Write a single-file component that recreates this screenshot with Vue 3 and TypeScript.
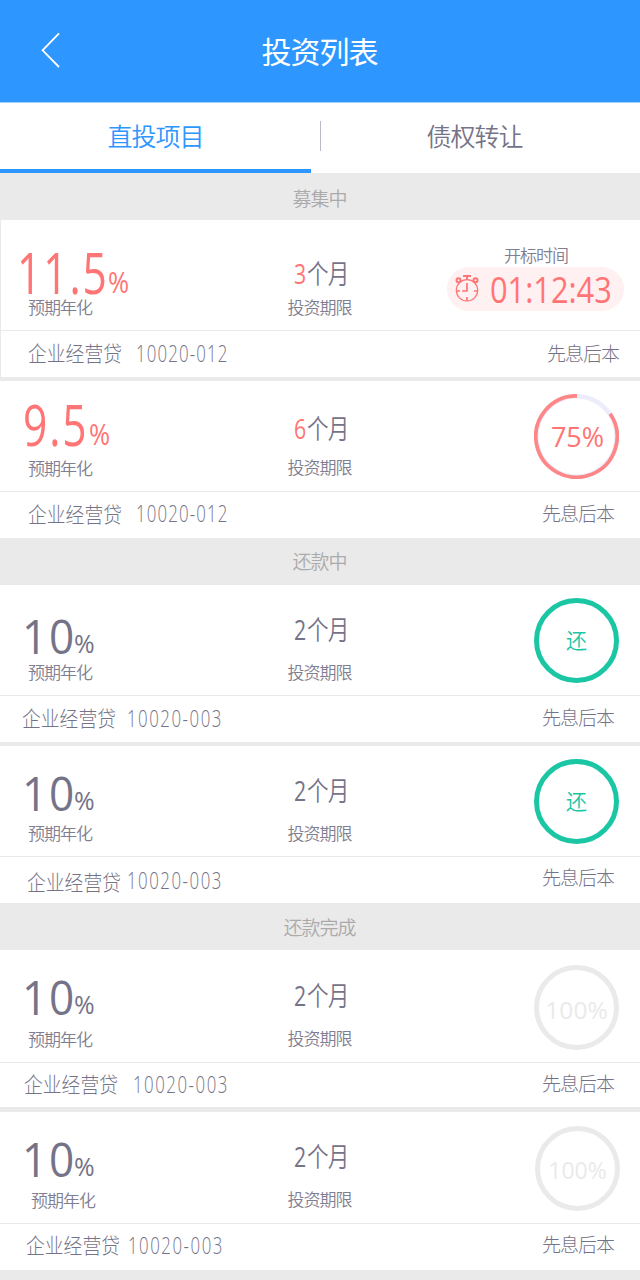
<script setup lang="ts">
type Status = 'countdown' | 'raising' | 'repaying' | 'done'
interface Project {
  id: string
  rate: string
  months: number
  code: string
  status: Status
}
interface Group {
  title: string
  items: Project[]
}

const groups: Group[] = [
  {
    title: '募集中',
    items: [
      { id: 'p1', rate: '11.5', months: 3, code: '10020-012', status: 'countdown' },
      { id: 'p2', rate: '9.5', months: 6, code: '10020-012', status: 'raising' },
    ],
  },
  {
    title: '还款中',
    items: [
      { id: 'p3', rate: '10', months: 2, code: '10020-003', status: 'repaying' },
      { id: 'p4', rate: '10', months: 2, code: '10020-003', status: 'repaying' },
    ],
  },
  {
    title: '还款完成',
    items: [
      { id: 'p5', rate: '10', months: 2, code: '10020-003', status: 'done' },
      { id: 'p6', rate: '10', months: 2, code: '10020-003', status: 'done' },
    ],
  },
]
</script>

<template>
  <main class="page">
    <header class="bar">
      <svg class="back" width="20" height="36" viewBox="0 0 20 36">
        <path d="M18 1.3 L1.6 18.3 L18 35" fill="none" stroke="#fff" stroke-width="1.8" />
      </svg>
      <h1>投资列表</h1>
    </header>
    <nav class="tabs">
      <div class="tab active"><span>直投项目</span></div>
      <div class="sep"></div>
      <div class="tab"><span>债权转让</span></div>
    </nav>

    <section v-for="(g, gi) in groups" :key="g.title" :class="['group', 'g' + gi]">
      <h2>{{ g.title }}</h2>
      <article v-for="p in g.items" :key="p.id" :class="['card', p.id, p.status]">
        <div class="top">
          <div class="yield">
            <div class="rate">
              <span class="num">{{ p.rate }}</span><span class="pct">%</span>
            </div>
            <div class="label">预期年化</div>
          </div>
          <div class="term">
            <div class="months">
              <span class="n">{{ p.months }}</span><span class="unit">个月</span>
            </div>
            <div class="label">投资期限</div>
          </div>
          <div class="state">
            <template v-if="p.status === 'countdown'">
              <div class="label open">开标时间</div>
              <div class="pill">
                <svg class="clock" width="26" height="30" viewBox="0 0 26 30" fill="none" stroke="#ff7575">
                  <circle cx="13" cy="17.3" r="10.7" stroke-width="1.2" />
                  <path d="M9 3H17M13 3V7" stroke-width="1.9" />
                  <circle cx="4.5" cy="7.2" r="2" stroke-width="2" />
                  <circle cx="21.5" cy="7.2" r="2" stroke-width="2" />
                  <path d="M13 10V18H8M2.5 18H6M20 18H23.5M13 24V28" stroke-width="1.7" />
                </svg>
                <span class="time">01:12:43</span>
              </div>
            </template>
            <div v-else class="ring">
              <svg width="85" height="85" viewBox="0 0 85 85" fill="none">
                <template v-if="p.status === 'raising'">
                  <circle cx="42.5" cy="42.5" r="40.2" stroke="#ececfa" stroke-width="4.6" />
                  <path d="M76.2 19.7A40.7 40.7 0 1 1 43 1.8" stroke="#ff8686" stroke-width="3.7" />
                </template>
                <circle v-else class="whole" cx="42.5" cy="42.5" r="40" stroke-width="5" />
              </svg>
              <span v-if="p.status === 'raising'" class="ring-text">75%</span>
              <span v-else-if="p.status === 'repaying'" class="ring-text">还</span>
              <span v-else class="ring-text">100%</span>
            </div>
          </div>
        </div>
        <div class="foot">
          <span class="name">企业经营贷</span>
          <span class="code">{{ p.code }}</span>
          <span class="mode">先息后本</span>
        </div>
      </article>
    </section>
  </main>
</template>

<style>
body {
  margin: 0;
  background: #eaeaea;
}
</style>

<style scoped>
.page {
  width: 640px;
  height: 1280px;
  overflow: hidden;
  background: #eaeaea;
  color: #757387;
  font-family: "Noto Sans CJK SC", sans-serif;
}
.bar {
  height: 102px;
  background: #2e96ff;
  border-bottom: 1px solid #a3d0ff;
  display: grid;
  grid-template-columns: 80px 1fr 80px;
  align-items: center;
}
.back { margin-left: 41px; margin-top: -2px; }
h1 {
  margin: -3px 0 0 -1px;
  color: #fff;
  font-size: 30px;
  letter-spacing: -1px;
  font-weight: 400;
  line-height: 40px;
  text-align: center;
}
.tabs {
  height: 70px;
  background: #fff;
  display: flex;
}
.tab {
  width: 311px;
  height: 66px;
  box-sizing: border-box;
  font-size: 25px;
  letter-spacing: -1px;
  font-weight: 350;
  line-height: 64px;
  text-align: center;
}
.tab.active {
  height: 70px;
  color: #2e96ff;
  border-bottom: 4px solid #2e96ff;
}
.sep { width: 1px; height: 30px; margin: 18px 0 0 9px; background: #bab9c6; }
.tab:last-child { margin-left: -2px; }

h2 {
  margin: 0 1px 0 0;
  height: 46.5px;
  color: #aaa;
  font-size: 19px;
  letter-spacing: -1px;
  font-weight: 350;
  line-height: 50px;
  text-align: center;
}
.g1 h2 { line-height: 46px; }
.g2 h2 { height: 47.5px; line-height: 48px; }

.card { height: 157.5px; background: #fff; margin-bottom: 3.5px; }
.card:last-child { margin-bottom: 0; }
.p1 { margin-left: 1px; }
.p3 { height: 157px; margin-bottom: 4px; }
.p4 { height: 157px; }
.p5 { height: 157px; margin-bottom: 5px; }
.top {
  height: 110.5px;
  display: grid;
  grid-template-columns: 288px 152px 200px;
  border-bottom: 1px solid #e9e9e9;
}
.p1 .top { margin-left: -1px; }
.p5 .top { height: 112px; }
.p6 .top { height: 111px; }
.foot {
  display: flex;
  height: 45px;
  white-space: nowrap;
}

.label {
  height: 20px;
  color: #807e90;
  font-size: 17px;
  letter-spacing: -1px;
  font-weight: 350;
  line-height: 18px;
  white-space: nowrap;
}
.yield .label { margin-left: 28px; }
.term .label { margin-left: -0.5px; line-height: 20px; }
.p3 .label, .p4 .label { line-height: 20px; }
.p6 .yield .label { margin-left: 31px; }

.rate {
  height: 60px;
  display: flex;
  line-height: 60px;
  font-family: "Open Sans", sans-serif;
  white-space: nowrap;
}
.num, .pct { transform-origin: left center; }
.num { font-size: 48px; width: 50px; letter-spacing: 2px; margin-left: 22px; line-height: 62px; transform: scaleX(0.92); }
.pct { font-size: 26px; margin-left: 2px; line-height: 76px; transform: scaleX(0.96); }
.countdown .num, .raising .num { font-size: 56px; letter-spacing: 2.5px; line-height: 61px; transform: scaleX(0.76); color: #ff7575; }
.countdown .num { width: 89px; margin-left: 17px; }
.raising .num { width: 65px; margin-left: 23px; }
.countdown .pct, .raising .pct { font-size: 29px; line-height: 80px; transform: scaleX(0.88); color: #ff7575; }
.raising .pct { margin-left: 1px; }

.yield .rate { margin-top: 20.5px; }
.p1 .yield .rate { margin-top: 22px; }
.p2 .yield .rate { margin-top: 13.5px; }
.p4 .yield .rate { margin-top: 16px; }
.p5 .yield .rate, .p6 .yield .rate { margin-top: 15.5px; }
.p1 .yield .label { margin-top: -4px; }
.p2 .yield .label { margin-top: 4.5px; }
.p3 .yield .label { margin-top: -3px; }
.p4 .yield .label { margin-top: 1.5px; }
.p5 .yield .label { margin-top: 4px; }
.p6 .yield .label { margin-top: 3px; }

.months { height: 30px; margin: 29px 0 0 6px; display: flex; line-height: 30px; white-space: nowrap; }
.n { width: 13px; font-family: "Open Sans", sans-serif; font-size: 28px; transform: scaleX(0.76); transform-origin: left center; }
.unit { margin-left: -0.5px; font-size: 27px; letter-spacing: -1px; font-weight: 350; line-height: 30px; transform: scaleX(0.8); transform-origin: left center; }
.countdown .n, .raising .n { color: #ff7575; }
.term .label { margin-top: 18px; }
.p1 .months { margin-top: 38px; }
.p1 .term .label { margin-top: 9px; }
.p2 .months { margin-top: 32px; }
.p2 .term .label { margin-top: 14px; }
.p5 .months { margin-top: 30px; }

.open { margin: 26px 0 0 64px; }
.pill {
  margin: 1px 0 0 7px;
  width: 177px;
  height: 44px;
  border-radius: 22px;
  background: #fff0f1;
  display: flex;
}
.clock { flex: none; margin: 6px 0 0 7px; }
.time {
  margin-left: 10px;
  color: #ff7575;
  font-family: "Open Sans", sans-serif;
  font-size: 36px;
  line-height: 46px;
  transform: scaleX(0.855);
  transform-origin: left center;
}
.ring { width: 85px; height: 85px; margin: 13.5px 0 0 94px; display: grid; }
.ring > * { grid-area: 1 / 1; }
.ring-text { text-align: center; font-family: "Open Sans", sans-serif; line-height: 85px; white-space: nowrap; }
.raising .ring-text { padding-left: 2px; color: #ff7575; font-size: 27px; }
.repaying .ring-text { color: #1ac6a4; font-family: "Noto Sans CJK SC", sans-serif; font-size: 21px; font-weight: 350; line-height: 82px; }
.repaying .whole { stroke: #1ac6a4; }
.done .whole { stroke: #eaeaea; }
.done .ring-text { color: #eaeaea; font-size: 24.5px; line-height: 90px; }
.p5 .ring { margin-top: 15px; }
.p6 .ring { margin-top: 14px; margin-left: 95px; }
.p6 .ring-text { font-size: 23px; line-height: 89px; }

.name, .code, .mode { font-weight: 300; transform-origin: left center; }
.name { flex: none; margin-left: 28px; width: 108px; font-size: 21px; line-height: 43px; transform: scaleX(0.895); }
.code { flex: none; font-family: "Open Sans", sans-serif; font-size: 23px; width: 100px; letter-spacing: 1.6px; line-height: 44px; transform: scaleX(0.73); }
.mode { margin-left: auto; margin-right: 26px; font-size: 19px; letter-spacing: -1px; line-height: 43px; }
.p1 .foot { margin-left: -1px; }
.p1 .mode { margin-right: 21px; }
.p2 .name, .p2 .mode, .p2 .code { line-height: 42px; }
.p3 .name { margin-left: 22px; width: 105px; line-height: 42px; }
.p3 .mode { line-height: 41px; }
.p3 .code, .p4 .code, .p5 .code, .p6 .code { letter-spacing: 2.1px; }
.p4 .name { margin-left: 27px; width: 100px; line-height: 48px; }
.p4 .code { line-height: 46px; }
.p4 .mode { line-height: 40px; }
.p5 .name { margin-left: 24px; width: 109px; line-height: 41px; }
.p5 .code { line-height: 42px; }
.p5 .mode { line-height: 40px; }
.p6 .name { margin-left: 26px; width: 102px; line-height: 41px; }
.p6 .code { line-height: 43px; }
.p6 .mode { line-height: 40px; }
</style>
